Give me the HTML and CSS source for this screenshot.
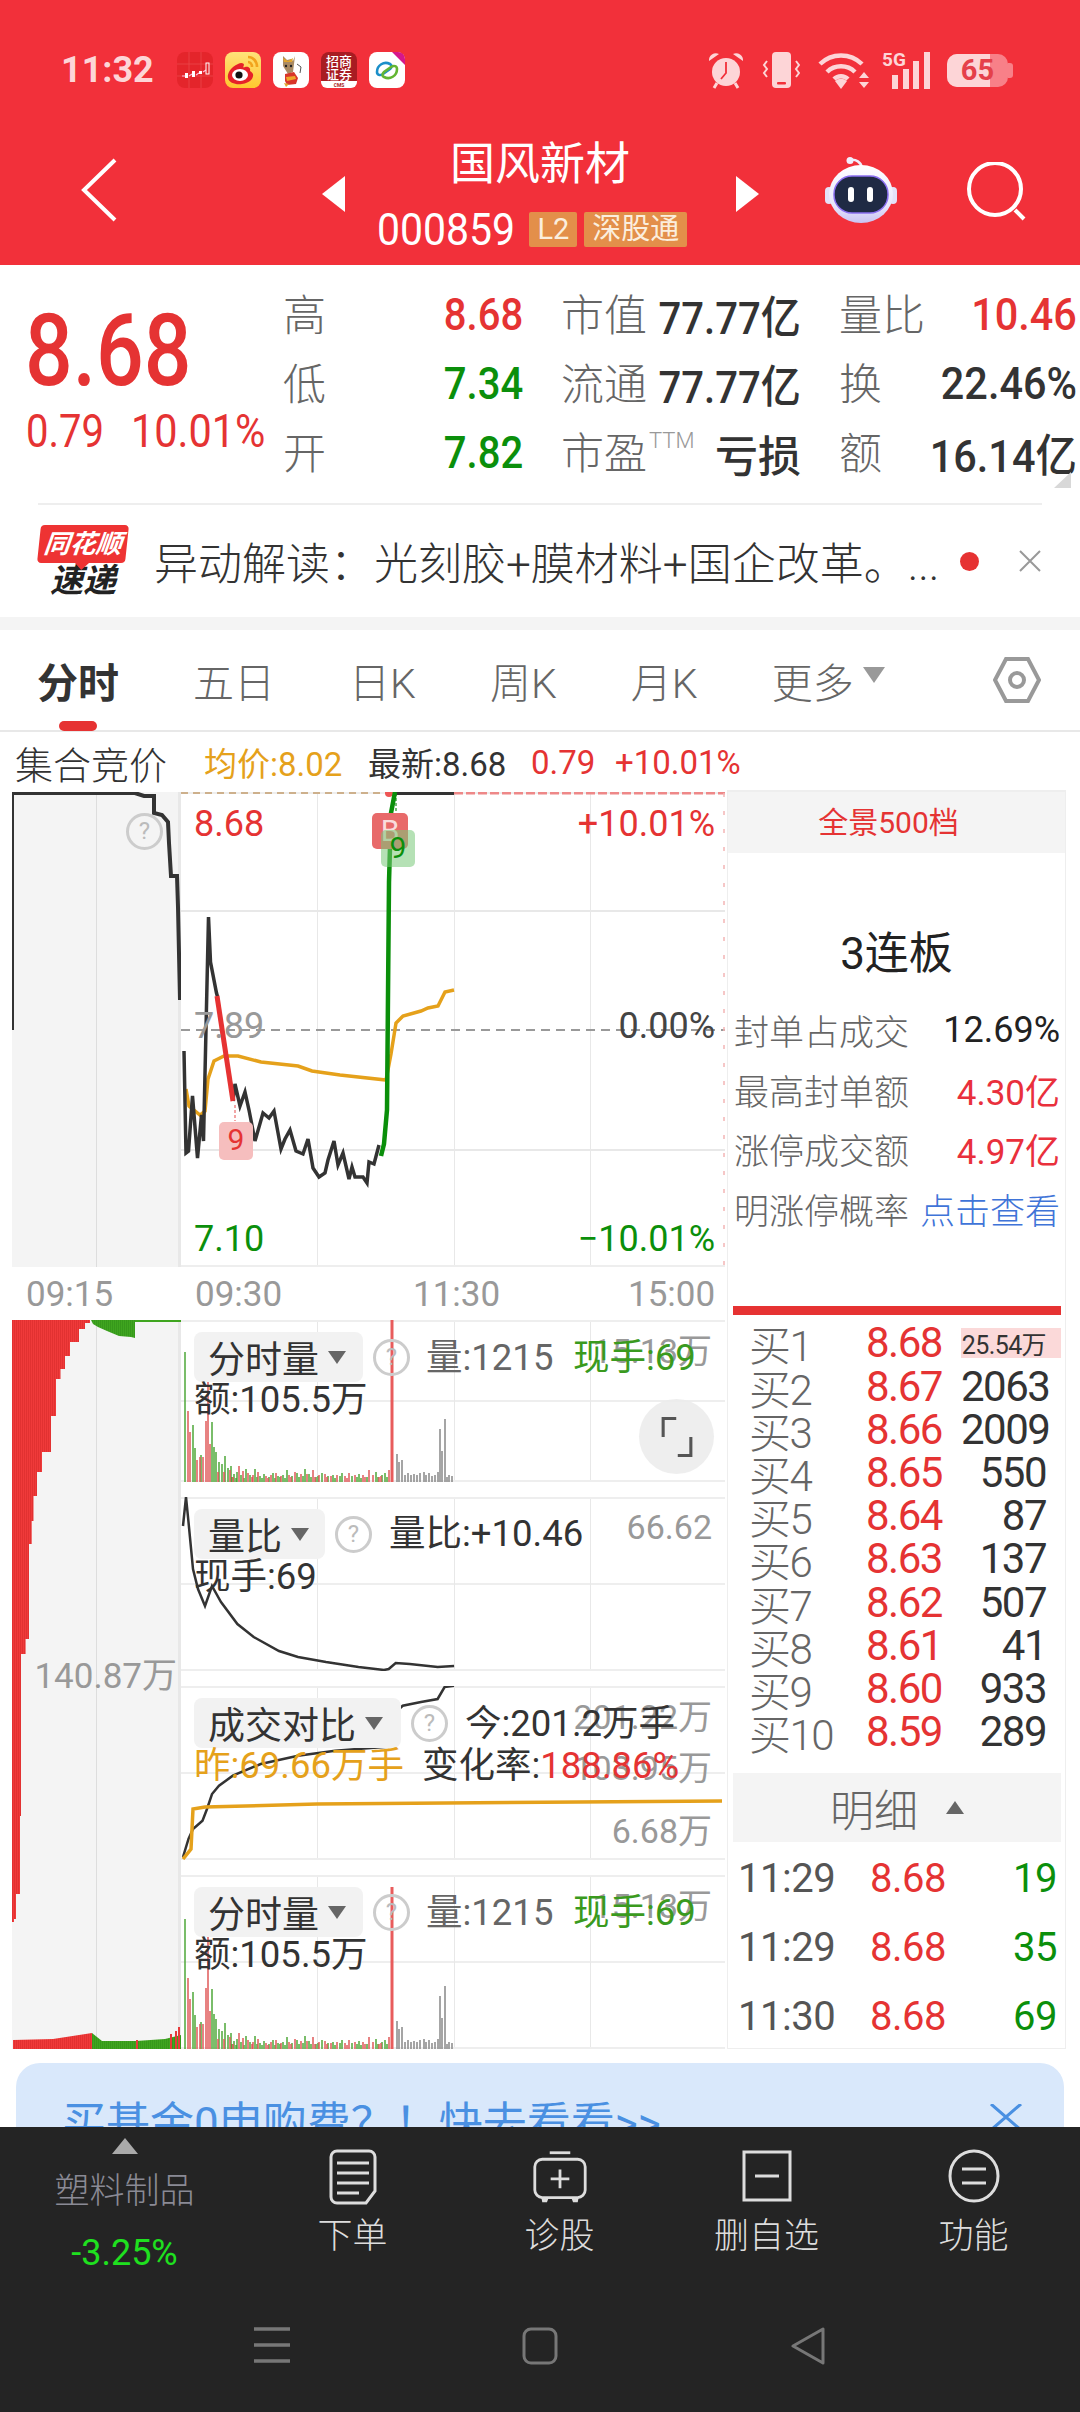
FILE: index.html
```html
<!DOCTYPE html>
<html lang="zh">
<head>
    <meta charset="UTF-8">
    <meta name="viewport" content="width=device-width, initial-scale=1.0">
    <title>国风新材 000859</title>
    <link rel="stylesheet" href="styles.css">
</head>
<body>
<div class="screen">

    <!-- Red header: status bar and stock title -->
    <header class="header">
        <div class="status-bar">
            <div class="status-left">
                <span class="clock">11:32</span>
                <svg class="app-icon" viewBox="0 0 36 36"><rect width="36" height="36" rx="8" fill="#e4252b"/><path d="M0 12h36M0 24h36M12 0v36M24 0v36" stroke="#ec4a4f" stroke-width="0.7"/><path d="M5 24h4M12 24l3-2M19 23l3-2M26 20l3-2" stroke="#fbd" stroke-width="1.2"/><rect x="8" y="21" width="3" height="5" fill="#fff"/><rect x="15" y="19" width="3" height="6" fill="#fff"/><rect x="22" y="19" width="3" height="3" fill="#fff"/><rect x="29" y="11" width="3" height="11" fill="none" stroke="#fff"/></svg>
                <svg class="app-icon" viewBox="0 0 36 36"><defs><linearGradient id="weibo-bg" x1="0" y1="0" x2="0" y2="1"><stop offset="0" stop-color="#ffe27a"/><stop offset="1" stop-color="#ffc62e"/></linearGradient></defs><rect width="36" height="36" rx="8" fill="url(#weibo-bg)"/><path d="M13 12C6 15 2 21 3 26c1 5 8 7 14 6 8-1 12-6 11-10-1-2-3-3-3-3 1-3-2-5-5-4-2 1-2 0-1-2 0-2-3-3-6-1z" fill="#e6212a"/><ellipse cx="15" cy="23" rx="8" ry="6" fill="#fff"/><circle cx="14" cy="23" r="3.600" fill="#111"/><path d="M23 5c5 0 9 4 9 10M23 10c2 0 4 2 4 5" stroke="#f2a31d" stroke-width="2.600" fill="none"/></svg>
                <svg class="app-icon" viewBox="0 0 36 36"><rect width="36" height="36" rx="8" fill="#fff"/><path d="M10 4l4 4 4-1 2 2 2-5-1 8-1 8-5 2-5-8z" fill="#a98a63"/><path d="M10 6l5 3 5-3-1 4h-8z" fill="#e2a52e"/><circle cx="13" cy="14" r="1.200" fill="#222"/><circle cx="18" cy="14" r="1.200" fill="#222"/><path d="M12 22l9-2 4 6-2 6-9 1-2-4z" fill="#d8352a"/><path d="M13 25l9-1 1 3-9 2z" fill="#f0a62a"/><path d="M24 12l4 3-1 6" stroke="#555" fill="none"/><path d="M11 31l2 4 3-3z" fill="#e2a52e"/></svg>
                <svg class="app-icon" viewBox="0 0 36 36"><rect width="36" height="36" rx="8" fill="#a81c22"/><path d="M0 29h36v1a6 6 0 0 1-6 6H6a6 6 0 0 1-6-6z" fill="#fff"/><text x="18" y="14" class="app-text">招商</text><text x="18" y="27" class="app-text">证券</text><text x="18" y="35" class="app-mark">CMS</text></svg>
                <svg class="app-icon" viewBox="0 0 36 36"><rect width="36" height="36" rx="8" fill="#fff"/><path d="M23 0h6a7 7 0 0 1 7 7v6z" fill="#d6168b"/><path d="M8 20c0-7 7-11 13-8 2 1 2 3 0 5l-7 5c-3 2-6 1-6-2z" fill="none" stroke="#1b8fc9" stroke-width="2.600"/><path d="M28 17c0 7-7 11-13 8-2-1-2-3 0-5l7-5c3-2 6-1 6 2z" fill="none" stroke="#63b532" stroke-width="2.600"/></svg>
            </div>
            <div class="status-right">
                <svg class="alarm" viewBox="0 0 36 38"><circle cx="18" cy="21" r="14" fill="#fdd5d7"/><path d="M18 11v11l-5 6" stroke="#f2303a" stroke-width="1.800" fill="none"/><path d="M1 10a7 7 0 0 1 10-7zM35 10a7 7 0 0 0-10-7z" fill="#fdd5d7"/><path d="M9 32l-3 5M27 32l3 5" stroke="#fdd5d7" stroke-width="3"/></svg>
                <svg class="vibrate" viewBox="0 0 38 38"><rect x="10" y="1" width="19" height="36" rx="4" fill="#fdd5d7"/><rect x="15" y="31" width="9" height="2.500" rx="1" fill="#f2303a"/><path d="M5 10l-3 4 3 4-3 4 3 4M34 10l3 4-3 4 3 4-3 4" stroke="#fdd5d7" stroke-width="2" fill="none"/></svg>
                <svg class="wifi" viewBox="0 0 52 38"><path d="M2 13a30 30 0 0 1 42 0M9 21a20 20 0 0 1 28 0M16 28a10 10 0 0 1 14 0" stroke="#fdd5d7" stroke-width="4.500" fill="none"/><path d="M23 38l-6-8a9 9 0 0 1 12 0z" fill="#fdd5d7"/><path d="M46 21l5 6H41zM46 37l5-6H41z" fill="#fdd5d7"/></svg>
                <svg class="signal" viewBox="0 0 50 38"><text x="0" y="15" class="net-text">5G</text><rect x="10" y="24" width="6" height="14" fill="#fdd5d7"/><rect x="21" y="18" width="6" height="20" fill="#fdd5d7"/><rect x="31" y="10" width="6" height="28" fill="#fdd5d7"/><rect x="42" y="1" width="6" height="37" fill="#fdd5d7"/></svg>
                <div class="battery"><span class="battery-level"></span><span class="battery-text">65</span></div>
            </div>
        </div>

        <div class="toolbar">
            <div class="toolbar-left">
                <svg class="back-icon" viewBox="0 0 36 64"><path d="M34 2L3 32l31 30" stroke="#fff" stroke-width="4" fill="none"/></svg>
            </div>
            <div class="stock-switch">
                <span class="tri-left"></span>
                <div class="stock-title">
                    <div class="stock-name">国风新材</div>
                    <div class="stock-sub">
                        <span class="stock-code">000859</span>
                        <span class="stock-tag">L2</span>
                        <span class="stock-tag">深股通</span>
                    </div>
                </div>
                <span class="tri-right"></span>
            </div>
            <div class="toolbar-right">
                <svg class="robot" viewBox="0 0 72 66">
                    <defs><linearGradient id="robot-head" x1="0" y1="0" x2="0" y2="1"><stop offset="0" stop-color="#ffffff"/><stop offset="0.7" stop-color="#e8e6fb"/><stop offset="1" stop-color="#c9c3f3"/></linearGradient></defs>
                    <path d="M25 3c6-1 11 2 12 8" stroke="#f1eefc" stroke-width="2.500" fill="none"/>
                    <circle cx="25" cy="3.500" r="3.500" fill="#f1eefc"/>
                    <rect x="0" y="30" width="8" height="17" rx="4" fill="#e4e1f8"/>
                    <rect x="64" y="30" width="8" height="17" rx="4" fill="#e4e1f8"/>
                    <ellipse cx="36" cy="37" rx="32" ry="29" fill="url(#robot-head)"/>
                    <rect x="9" y="19" width="54" height="37" rx="18" fill="#1f2a44" stroke="#8a6ff0" stroke-width="1.500"/>
                    <rect x="23" y="30" width="6" height="15" rx="3" fill="#fff"/>
                    <rect x="42" y="30" width="6" height="15" rx="3" fill="#fff"/>
                </svg>
                <svg class="search" viewBox="0 0 60 60"><circle cx="29" cy="27" r="26" stroke="#fff" stroke-width="4" fill="none"/><path d="M49 48l9 9" stroke="#fff" stroke-width="4"/></svg>
            </div>
        </div>
    </header>

    <!-- Price and headline numbers -->
    <section class="quote">
        <div class="quote-price">
            <div class="price-big">8.68</div>
            <div class="price-change"><span class="change-abs">0.79</span><span class="change-pct">10.01%</span></div>
        </div>
        <div class="quote-table">
            <div class="cell"><span class="cell-name">高</span><span class="cell-num up">8.68</span></div>
            <div class="cell"><span class="cell-name">市值</span><span class="cell-num">77.77亿</span></div>
            <div class="cell"><span class="cell-name">量比</span><span class="cell-num up">10.46</span></div>
            <div class="cell"><span class="cell-name">低</span><span class="cell-num down">7.34</span></div>
            <div class="cell"><span class="cell-name">流通</span><span class="cell-num">77.77亿</span></div>
            <div class="cell"><span class="cell-name">换</span><span class="cell-num">22.46%</span></div>
            <div class="cell"><span class="cell-name">开</span><span class="cell-num down">7.82</span></div>
            <div class="cell"><span class="cell-name">市盈<sup class="ttm">TTM</sup></span><span class="cell-num loss">亏损</span></div>
            <div class="cell"><span class="cell-name">额</span><span class="cell-num">16.14亿</span></div>
        </div>
        <span class="corner-mark"></span>
    </section>

    <!-- News ticker -->
    <section class="news">
        <div class="news-logo">
            <span class="logo-top">同花顺</span>
            <span class="logo-bottom">速递</span>
        </div>
        <div class="news-text">异动解读：光刻胶+膜材料+国企改革。...</div>
        <span class="news-dot"></span>
        <svg class="news-close" viewBox="0 0 24 24"><path d="M2 2l20 20M22 2L2 22" stroke="#999" stroke-width="2"/></svg>
    </section>

    <div class="band"></div>

    <!-- Period tabs -->
    <nav class="tabs">
        <span class="tab active">分时</span>
        <span class="tab">五日</span>
        <span class="tab">日K</span>
        <span class="tab">周K</span>
        <span class="tab">月K</span>
        <span class="tab tab-more">更多<i class="more-arrow"></i></span>
        <svg class="hex-icon" viewBox="0 0 48 46"><path d="M13 2h22l11 21-11 21H13L2 23z" stroke="#999" stroke-width="4" fill="none"/><circle cx="24" cy="23" r="7" stroke="#999" stroke-width="4" fill="none"/></svg>
    </nav>

    <div class="chart-head">
        <span class="head-title">集合竞价</span>
        <span class="head-avg">均价:8.02</span>
        <span class="head-last">最新:8.68</span>
        <span class="head-change">0.79</span>
        <span class="head-pct">+10.01%</span>
    </div>

    <section class="market">
        <div class="charts">

            <!-- Price chart -->
            <div class="chart-row">
                <div class="auction auction-main">
                    <svg class="fill" viewBox="12 793 169 475">
                        <path d="M12 1031V794H135l9 3h10v17l8 2 6 7 1 21 2 33h6l1 31 2 93" stroke="#333" stroke-width="4" fill="none"/>
                    </svg>
                    <span class="help help-main">?</span>
                </div>
                <div class="pane pane-main">
                    <svg class="fill" viewBox="181 793 544 475">
                        <path d="M181 1031H725" stroke="#999" stroke-width="2" stroke-dasharray="9 6"/>
                        <path d="M181 794H395" stroke="#cdb08c" stroke-width="2" stroke-dasharray="7 5"/>
                        <path d="M454 794H725" stroke="#e88" stroke-width="3" stroke-dasharray="9 3"/>
                        <path d="M724 794V1268" stroke="#f3b5b5" stroke-width="1.500" stroke-dasharray="4 14"/>
                        <path d="M186 1090l3 17 11 9 5-4 3-32 6-18 10-5 14 0 23 6 37 4 14 5 28 4 46 5 5-26 5-31 7-7 18-5 7-3 10-2 7-14 9-2" stroke="#e5a11b" stroke-width="3.500" fill="none"/>
                        <path d="M184 1052l2 102 2.500-2 4-55 5 62 4-43 2 26 5-224 2 45 6 31 1 3.500" stroke="#333" stroke-width="3.500" fill="none"/>
                        <path d="M233 1102l2-17 5 22 5-14 4 18 6 31 8-28 6 5 5-7 7 38 4-10 5-9 6 21 7 3 5-15 5 29 6 9 6-4 3-13 6-19 4 24 5-12 6 26 3-12 3 10 8 0 4 6 2-21 5 2 5-19" stroke="#333" stroke-width="3.500" fill="none"/>
                        <path d="M217 997l16 105" stroke="#e63232" stroke-width="5" fill="none"/>
                        <path d="M235 1106v16" stroke="#e88" stroke-width="1.500" stroke-dasharray="3 2"/>
                        <path d="M396 794v37" stroke="#4aa64a" stroke-width="1.500" stroke-dasharray="3 2"/>
                        <path d="M395 794h59" stroke="#333" stroke-width="4"/>
                        <circle cx="389" cy="794" r="4" fill="#e55"/>
                        <path d="M381 1157l3-12 3-34 2-228 2-69 4-21" stroke="#0a8f0a" stroke-width="4.500" fill="none"/>
                    </svg>
                    <span class="trade-tag tag-buy">B</span>
                    <span class="trade-tag tag-green">9</span>
                    <span class="trade-tag tag-red">9</span>
                    <span class="lbl num-left up">8.68</span>
                    <span class="lbl num-right up">+10.01%</span>
                    <span class="lbl num-left mid-row muted">7.89</span>
                    <span class="lbl num-right mid-row dark">0.00%</span>
                    <span class="lbl num-left low-row down">7.10</span>
                    <span class="lbl num-right low-row down">−10.01%</span>
                </div>
            </div>

            <div class="time-axis">
                <span class="time-open">09:15</span>
                <span class="time-start">09:30</span>
                <span class="time-noon">11:30</span>
                <span class="time-close">15:00</span>
            </div>

            <div class="chart-row">
                <!-- Auction volume column beside the indicator panes -->
                <div class="auction auction-low">
                    <svg class="fill" viewBox="12 1321 169 729">
                        <defs>
                            <pattern id="red-stripes" width="2" height="4" patternUnits="userSpaceOnUse"><rect width="2" height="4" fill="#f03a3a"/><rect width="0.600" height="4" fill="#d92b2b"/></pattern>
                            <pattern id="green-stripes" width="2" height="4" patternUnits="userSpaceOnUse"><rect width="2" height="4" fill="#3fa51f"/><rect width="0.600" height="4" fill="#2f8f18"/></pattern>
                        </defs>
                        <path d="M12 1321H90V1324H85V1330H79V1343H70V1357H65V1370H60.500V1380H56V1417H51V1453H42V1473H37V1497H33.500V1522H31.700V1545H29V1640H25.600V1655H21V1817H20V1895H16V1920H14V1923H12z" fill="url(#red-stripes)"/>
                        <path d="M91 1321h44v18l-4-1-12-1-12-5-9-4-5-3z" fill="url(#green-stripes)"/>
                        <path d="M135 1321h46v2h-46z" fill="#3fa51f"/>
                        <path d="M13 2050v-9l40-1 39-6v16z" fill="url(#red-stripes)"/>
                        <path d="M92 2050v-16l10 8 34 0 29-2 16-4v14z" fill="url(#green-stripes)"/>
                        <path d="M136 2050v-9h2v9zM170 2050v-15h2v15zM175 2050v-18h2v18zM178 2050v-22h2v22z" fill="#e63a3a"/>
                    </svg>
                    <span class="lbl auction-total">140.87万</span>
                </div>
                <div class="panes">

                    <div class="pane pane-short">
                        <svg class="fill" viewBox="0 0 544 162">
                            <g id="vol-bars" fill="none" stroke-width="1.500">
                                <path stroke="#4fa83a" d="M4 162V32M12 162V105M14 162V128M20 162V135M31 162V102M33 162V127M35 162V132M38 162V142M41 162V144M44 162V136M47 162V148M50 162V146M51 162V157M53 162V154M55 162V158M56 162V152M60 162V155M63 162V158M65 162V149M69 162V155M74 162V149M76 162V157M79 162V156M81 162V158M83 162V154M88 162V157M92 162V153M94 162V158M97 162V156M99 162V157M102 162V155M104 162V158M106 162V150M111 162V156M116 162V153M118 162V157M122 162V156M124 162V149M128 162V154M130 162V157M135 162V157M137 162V156M141 162V153M147 162V156M152 162V155M154 162V158M159 162V156M161 162V153M171 162V156M176 162V157M178 162V154M180 162V158M186 162V157M195 162V152M197 162V157M201 162V155M204 162V153M206 162V157"/>
                                <path stroke="#e05a5a" d="M7 162V91M9 162V112M16 162V140M19 162V137M22 162V137M25 162V101M27 162V32M29 162V124M37 162V152M43 162V152M49 162V150M52 162V157M58 162V146M62 162V151M67 162V153M71 162V157M72 162V155M77 162V152M85 162V156M87 162V158M90 162V155M95 162V153M100 162V156M108 162V155M110 162V157M114 162V152M120 162V154M126 162V154M132 162V150M134 162V157M138 162V155M144 162V154M146 162V157M150 162V156M156 162V155M164 162V156M166 162V158M168 162V153M174 162V155M182 162V155M184 162V157M188 162V150M192 162V155M198 162V157M200 162V156M208 162V150"/>
                                <path stroke="#e85c5c" stroke-width="3" d="M211 162V0"/>
                                <path stroke="#888" d="M216 162V134M218 162V142M221 162V140M224 162V155M227 162V153M230 162V155M233 162V154M236 162V155M239 162V153M243 162V152M245 162V155M248 162V153M251 162V156M254 162V155M257 162V152M259 162V109M261 162V131M264 162V99M266 162V157M268 162V155M271 162V156"/>
                            </g>
                        </svg>
                        <span class="chip chip-vol">分时量<i class="chip-arrow"></i></span>
                        <span class="help help-vol">?</span>
                        <span class="lbl axis-top">15.13万</span>
                        <span class="lbl vol-value">量:1215</span>
                        <span class="lbl vol-hand">现手:69</span>
                        <span class="lbl second-row">额:105.5万</span>
                        <span class="expand">
                            <svg viewBox="0 0 40 52"><path d="M19 2H2v24M21 50h17V26" stroke="#555" stroke-width="4" fill="none"/></svg>
                        </span>
                    </div>

                    <div class="pane pane-tall">
                        <svg class="fill" viewBox="181 1498 544 174">
                            <path d="M183 1527l3-29 2.500 25 4.500 47 5 20 7 17 7-20 9 16 16.400 22 16.300 13 25.300 14 19 6 28 5 32.500 5 25.500 3 4.700-1 7-6 14 1 28 3 16.400-1" stroke="#333" stroke-width="2.500" fill="none"/>
                        </svg>
                        <span class="chip chip-ratio">量比<i class="chip-arrow"></i></span>
                        <span class="help help-ratio">?</span>
                        <span class="lbl axis-top axis-ratio">66.62</span>
                        <span class="lbl ratio-value">量比:+10.46</span>
                        <span class="lbl second-row">现手:69</span>
                    </div>

                    <div class="pane pane-tall">
                        <svg class="fill" viewBox="181 1687 544 174">
                            <path d="M183 1858l5.500-18 4.500-10 9.500-8.300 4.500-11.700 5-15 7-8.300 13.800-10 27.900-11.700 37.300-8.300 37-5 51.400-4 4.600-14.700 4.700-20 7-6.300 18.300-3.700 16.600-3 7-12 9.400-1.300" stroke="#333" stroke-width="2.500" fill="none"/>
                            <path d="M183 1860l8-10 2-40 12-2 112-3 405-3" stroke="#e5a11b" stroke-width="3.500" fill="none"/>
                        </svg>
                        <span class="chip chip-compare">成交对比<i class="chip-arrow"></i></span>
                        <span class="help help-compare">?</span>
                        <span class="lbl axis-top axis-compare">201.22万</span>
                        <span class="lbl axis-top axis-compare-mid">103.95万</span>
                        <span class="lbl axis-top axis-compare-low">6.68万</span>
                        <span class="lbl today-value">今:201.2万手</span>
                        <span class="lbl second-row orange">昨:69.66万手</span>
                        <span class="lbl rate-value">变化率:<span class="up">188.86%</span></span>
                    </div>

                    <div class="pane pane-tall pane-last">
                        <svg class="fill" viewBox="0 -12 544 174"><use href="#vol-bars"/></svg>
                        <span class="chip chip-vol">分时量<i class="chip-arrow"></i></span>
                        <span class="help help-vol">?</span>
                        <span class="lbl axis-top">15.13万</span>
                        <span class="lbl vol-value">量:1215</span>
                        <span class="lbl vol-hand">现手:69</span>
                        <span class="lbl second-row">额:105.5万</span>
                    </div>

                </div>
            </div>
        </div>

        <!-- Order book column -->
        <aside class="side">
            <div class="side-tab">全景500档</div>
            <div class="board-name">3连板</div>
            <div class="stats">
                <div class="stat"><span>封单占成交</span><b>12.69%</b></div>
                <div class="stat"><span>最高封单额</span><b class="up">4.30亿</b></div>
                <div class="stat"><span>涨停成交额</span><b class="up">4.97亿</b></div>
                <div class="stat"><span>明涨停概率</span><a class="stat-link">点击查看</a></div>
            </div>
            <div class="book-bar"></div>
            <div class="book">
                <div class="book-row"><span class="book-name">买1</span><span class="book-price">8.68</span><span class="book-vol book-big">25.54万</span></div>
                <div class="book-row"><span class="book-name">买2</span><span class="book-price">8.67</span><span class="book-vol">2063</span></div>
                <div class="book-row"><span class="book-name">买3</span><span class="book-price">8.66</span><span class="book-vol">2009</span></div>
                <div class="book-row"><span class="book-name">买4</span><span class="book-price">8.65</span><span class="book-vol">550</span></div>
                <div class="book-row"><span class="book-name">买5</span><span class="book-price">8.64</span><span class="book-vol">87</span></div>
                <div class="book-row"><span class="book-name">买6</span><span class="book-price">8.63</span><span class="book-vol">137</span></div>
                <div class="book-row"><span class="book-name">买7</span><span class="book-price">8.62</span><span class="book-vol">507</span></div>
                <div class="book-row"><span class="book-name">买8</span><span class="book-price">8.61</span><span class="book-vol">41</span></div>
                <div class="book-row"><span class="book-name">买9</span><span class="book-price">8.60</span><span class="book-vol">933</span></div>
                <div class="book-row"><span class="book-name">买10</span><span class="book-price">8.59</span><span class="book-vol">289</span></div>
            </div>
            <div class="detail-head">明细<i class="detail-arrow"></i></div>
            <div class="detail-row"><span class="detail-time">11:29</span><span class="detail-price">8.68</span><span class="detail-vol">19</span></div>
            <div class="detail-row"><span class="detail-time">11:29</span><span class="detail-price">8.68</span><span class="detail-vol">35</span></div>
            <div class="detail-row"><span class="detail-time">11:30</span><span class="detail-price">8.68</span><span class="detail-vol">69</span></div>
        </aside>
    </section>

    <div class="banner">
        <span class="banner-text">买基金0申购费？！快去看看&gt;&gt;</span>
        <svg class="banner-close" viewBox="0 0 32 26"><path d="M1 0l30 26M31 0L1 26" stroke="#4a90e2" stroke-width="3"/></svg>
    </div>

    <!-- Dark action bar and system navigation -->
    <footer class="footer">
        <div class="actions">
            <div class="sector">
                <span class="sector-arrow"></span>
                <span class="sector-name">塑料制品</span>
                <span class="sector-pct">-3.25%</span>
            </div>
            <div class="action">
                <svg class="action-icon" viewBox="0 0 50 56"><path d="M9 2h32a6 6 0 0 1 6 6v34l-9 12H9a6 6 0 0 1-6-6V8a6 6 0 0 1 6-6z" stroke="#ddd" stroke-width="3" fill="none"/><path d="M9 14h32M9 24h32M9 34h32M9 44h22" stroke="#ddd" stroke-width="3"/></svg>
                <span>下单</span>
            </div>
            <div class="action">
                <svg class="action-icon" viewBox="0 0 60 56"><path d="M19 2h22" stroke="#ddd" stroke-width="3"/><rect x="3" y="9" width="54" height="41" rx="8" stroke="#ddd" stroke-width="3" fill="none"/><path d="M30 20v20M20 30h20" stroke="#ddd" stroke-width="3"/><path d="M10 50h8l-2 5h-5zM42 50h8l-1 5h-5z" fill="#ddd"/></svg>
                <span>诊股</span>
            </div>
            <div class="action">
                <svg class="action-icon" viewBox="0 0 50 56"><rect x="2" y="3" width="46" height="48" stroke="#ddd" stroke-width="3" fill="none"/><path d="M13 27h24" stroke="#ddd" stroke-width="3"/></svg>
                <span>删自选</span>
            </div>
            <div class="action">
                <svg class="action-icon" viewBox="0 0 52 56"><ellipse cx="26" cy="27" rx="24" ry="25" stroke="#ddd" stroke-width="3" fill="none"/><path d="M14 20h24M14 34h24" stroke="#ddd" stroke-width="3"/></svg>
                <span>功能</span>
            </div>
        </div>
        <div class="nav-bar">
            <svg class="nav-menu" viewBox="0 0 36 36"><path d="M0 2h36M0 18h36M0 34h36" stroke="#777" stroke-width="3.500"/></svg>
            <svg class="nav-home" viewBox="0 0 36 38"><rect x="2" y="2" width="32" height="34" rx="7" stroke="#777" stroke-width="3" fill="none"/></svg>
            <svg class="nav-back" viewBox="0 0 36 38"><path d="M33 2v34L3 19z" stroke="#777" stroke-width="3" stroke-linejoin="round" fill="none"/></svg>
        </div>
    </footer>
</div>
</body>
</html>
```
FILE: styles.css
```css
* {
    box-sizing: border-box;
}

body {
    margin: 0;
    background-color: #fff;
    font-family: Roboto, "Noto Sans CJK SC", sans-serif;
    color: #333;
}

.screen {
    position: relative;
    width: 1080px;
    height: 2412px;
    overflow: hidden;
}

.up { color: #e53333; }
.down { color: #0b8f0b; }
.muted { color: #999; }
.dark { color: #444; }
.orange { color: #e5a11b; }

/* Header */
.header {
    height: 265px;
    background-color: #f2303a;
    color: #fff;
}

.status-bar {
    display: flex;
    justify-content: space-between;
    align-items: center;
    height: 140px;
    padding: 0 68px 0 61px;
}

.status-left,
.status-right {
    display: flex;
    align-items: center;
}

.clock {
    width: 116px;
    font-size: 36px;
    font-weight: 700;
    color: #fdd5d7;
}

.app-icon {
    width: 36px;
    height: 36px;
    margin-right: 12px;
}

.app-text {
    font-size: 13px;
    font-weight: 500;
    fill: #fff;
    text-anchor: middle;
}

.app-mark {
    font-size: 5px;
    font-weight: 700;
    fill: #a81c22;
    text-anchor: middle;
}

.net-text {
    font-size: 19px;
    font-weight: 700;
    fill: #fdd5d7;
}

.alarm { width: 36px; height: 38px; margin-right: 18px; }
.vibrate { width: 38px; height: 38px; margin-right: 18px; }
.wifi { width: 52px; height: 38px; margin-right: 12px; }
.signal { width: 50px; height: 38px; margin-right: 15px; }

.battery {
    position: relative;
    width: 61px;
    height: 33px;
    margin-right: 4px;
    border-radius: 10px;
    background-color: #f88088;
    text-align: center;
}

.battery::after {
    content: "";
    position: absolute;
    right: -5px;
    top: 9px;
    width: 5px;
    height: 15px;
    border-radius: 0 3px 3px 0;
    background-color: #f88088;
}

.battery-level {
    position: absolute;
    left: 0;
    top: 0;
    bottom: 0;
    width: 43px;
    border-radius: 10px 0 0 10px;
    background-color: #fdd5d7;
}

.battery-text {
    position: relative;
    font-size: 29px;
    line-height: 33px;
    font-weight: 700;
    color: #e5404a;
}

.toolbar {
    display: grid;
    grid-template-columns: 1fr auto 1fr;
}

.toolbar-left {
    padding: 18px 0 0 81px;
}

.back-icon {
    width: 36px;
    height: 64px;
}

.stock-switch {
    display: flex;
    align-items: center;
    width: 437px;
    justify-content: space-between;
}

.tri-left,
.tri-right {
    width: 0;
    height: 0;
    border-top: 18px solid transparent;
    border-bottom: 18px solid transparent;
}

.tri-left { border-right: 23px solid #fff; }
.tri-right { border-left: 23px solid #fff; }

.stock-title {
    display: flex;
    flex-direction: column;
    align-items: center;
}

.stock-name {
    font-size: 45px;
    line-height: 50px;
}

.stock-sub {
    display: flex;
    align-items: center;
    gap: 7px;
    margin: 21px 16px 0 0;
    height: 36px;
}

.stock-code {
    margin-right: -6px;
    font-size: 45px;
    transform: scaleX(0.91);
    transform-origin: left center;
}

.stock-tag {
    height: 35px;
    padding: 0 8px;
    background-color: #e38f4a;
    border-radius: 2px;
    font-size: 29px;
    line-height: 35px;
    color: #fbeedd;
}

.toolbar-right {
    display: flex;
    justify-content: flex-end;
    align-items: flex-start;
    gap: 69px;
    padding: 17px 54px 0 0;
}

.robot { width: 72px; height: 66px; }
.search { width: 60px; height: 60px; margin-top: 5px; }

/* Quote block */
.quote {
    position: relative;
    display: flex;
    height: 238px;
    margin: 0;
}

.quote-price {
    width: 283px;
    padding: 26px 0 0 25px;
    color: #e53333;
}

/* The price figures are drawn narrower than Roboto's own width */
.price-big {
    font-size: 100px;
    line-height: 120px;
    font-weight: 500;
    transform: scaleX(0.84);
    transform-origin: left center;
}

.price-change {
    display: flex;
    margin-top: -2px;
    font-size: 46px;
    line-height: 44px;
}

.change-abs,
.change-pct {
    flex: none;
    transform-origin: left center;
}

.change-abs {
    width: 105px;
    margin-left: 1px;
    transform: scaleX(0.87);
}

.change-pct {
    transform: scaleX(0.9);
}

.quote-table {
    display: grid;
    grid-template-columns: 240px 240px 240px;
    grid-auto-rows: 69px;
    column-gap: 38px;
    padding-top: 15px;
}

.cell {
    display: flex;
    justify-content: space-between;
    align-items: center;
    white-space: nowrap;
}

.cell-name {
    position: relative;
    top: -3px;
    font-size: 43px;
    font-weight: 300;
    color: #666;
}

.cell-num {
    margin-left: -60px;
    font-size: 45px;
    font-weight: 500;
    transform: scaleX(0.89);
    transform-origin: right center;
}

.cell:nth-child(3n) {
    padding-right: 2px;
}

.cell:nth-child(3n) .cell-num {
    transform: scaleX(0.92);
}

.loss {
    font-size: 43px;
    transform: none;
}

.ttm {
    position: absolute;
    top: 10px;
    left: 88px;
    font-size: 22px;
    line-height: 24px;
    color: #999;
}

.corner-mark {
    position: absolute;
    right: 9px;
    bottom: 15px;
    border-left: 17px solid transparent;
    border-bottom: 16px solid #d8d8d8;
}

/* News */
.news {
    display: flex;
    align-items: center;
    height: 114px;
    margin: 0 38px;
    border-top: 2px solid #eee;
}

.news-logo {
    flex: none;
    display: flex;
    flex-direction: column;
    align-items: center;
    width: 90px;
    margin-right: 26px;
    font-style: italic;
    font-weight: 700;
}

.logo-top {
    position: relative;
    width: 88px;
    height: 38px;
    background-color: #e33;
    border-radius: 4px;
    color: #fff;
    font-size: 26px;
    line-height: 38px;
    text-align: center;
    transform: skewX(-6deg);
}

.logo-top::after {
    content: "";
    position: absolute;
    left: 38px;
    top: 38px;
    border-left: 7px solid transparent;
    border-right: 7px solid transparent;
    border-top: 7px solid #e33;
}

.logo-bottom {
    margin-top: 1px;
    font-size: 33px;
    line-height: 34px;
    color: #222;
}

.news-text {
    flex: none;
    width: 806px;
    font-size: 44px;
    font-weight: 300;
    white-space: nowrap;
    color: #333;
}

.news-dot {
    flex: none;
    width: 19px;
    height: 19px;
    border-radius: 50%;
    background-color: #e63232;
}

.news-close {
    flex: none;
    width: 24px;
    height: 24px;
    margin-left: 39px;
}

.band {
    height: 13px;
    background-color: #f4f4f4;
}

/* Tabs */
.tabs {
    display: flex;
    align-items: center;
    gap: 74px;
    height: 102px;
    padding-left: 37px;
    border-bottom: 2px solid #e8e8e8;
    font-size: 41px;
    font-weight: 300;
    color: #666;
}

.tab.active {
    position: relative;
    font-weight: 700;
    color: #333;
}

.tab.active::after {
    content: "";
    position: absolute;
    left: 22px;
    bottom: -21px;
    width: 38px;
    height: 10px;
    border-radius: 5px;
    background-color: #e63232;
}

.tab-more {
    display: flex;
    align-items: center;
}

.more-arrow {
    margin: -10px 0 0 9px;
    border-left: 11px solid transparent;
    border-right: 11px solid transparent;
    border-top: 16px solid #999;
}

.hex-icon {
    width: 48px;
    height: 46px;
    margin-left: 34px;
}

.chart-head {
    display: flex;
    align-items: center;
    height: 58px;
    padding: 2px 0 0 15px;
    font-size: 33px;
}

.head-title {
    width: 189px;
    font-size: 38px;
    font-weight: 300;
}

.head-avg {
    width: 164px;
    color: #e5a11b;
}

.head-last {
    width: 163px;
}

.head-change {
    width: 84px;
    color: #e53333;
}

.head-pct {
    color: #e53333;
}

/* Chart column */
.market {
    display: flex;
    height: 1259px;
    padding-left: 12px;
}

.charts {
    width: 715px;
    padding-top: 2px;
}

.chart-row {
    display: flex;
}

.auction {
    position: relative;
    flex: none;
    width: 169px;
    border-right: 3px solid #e8e8e8;
    background-color: #f4f4f4;
    background-image: linear-gradient(#ddd, #ddd);
    background-repeat: no-repeat;
    background-position: 84px 0;
    background-size: 1px 100%;
}

.auction-main {
    height: 475px;
}

.auction-low {
    height: 729px;
}

.fill {
    position: absolute;
    left: 0;
    top: 0;
    width: 100%;
    height: 100%;
}

/* The drawings span the full box, borders included */
.auction .fill {
    width: calc(100% + 3px);
}

.pane .fill {
    top: -2px;
    height: calc(100% + 4px);
}

.pane {
    position: relative;
    width: 544px;
    border-top: 2px solid #eee;
    border-bottom: 2px solid #eee;
    background-image:
        linear-gradient(#e8e8e8, #e8e8e8),
        linear-gradient(#e8e8e8, #e8e8e8),
        linear-gradient(#e8e8e8, #e8e8e8),
        linear-gradient(#eee, #eee);
    background-repeat: no-repeat;
    background-size: 1px 100%, 1px 100%, 1px 100%, 100% 2px;
    background-position: 136px 0, 273px 0, 409px 0, 0 50%;
}

.pane-main {
    height: 475px;
    background-image:
        linear-gradient(#e8e8e8, #e8e8e8),
        linear-gradient(#e8e8e8, #e8e8e8),
        linear-gradient(#e8e8e8, #e8e8e8),
        linear-gradient(#e8e8e8, #e8e8e8),
        linear-gradient(#e8e8e8, #e8e8e8);
    background-size: 1px 100%, 1px 100%, 1px 100%, 100% 2px, 100% 2px;
    background-position: 136px 0, 273px 0, 409px 0, 0 116px, 0 355px;
}

.pane-short {
    height: 162px;
    margin-bottom: 15px;
}

.pane-tall {
    height: 174px;
    margin-bottom: 15px;
}

.pane-last {
    margin-bottom: 0;
}

.panes {
    flex: none;
}

.lbl {
    position: absolute;
    font-size: 36.5px;
    line-height: 40px;
    white-space: nowrap;
}

.num-left { left: 13px; top: 10px; font-size: 36px; }
.num-right { right: 10px; top: 10px; font-size: 36px; }
.mid-row { top: 212px; }
.low-row { top: 425px; }

.trade-tag {
    position: absolute;
    width: 34px;
    border-radius: 5px;
    font-size: 30px;
    line-height: 36px;
    text-align: center;
}

.tag-buy {
    left: 191px;
    top: 19px;
    width: 36px;
    height: 36px;
    background-color: #e86a6a;
    color: #f9dcdc;
}

.tag-green {
    left: 200px;
    top: 36px;
    height: 37px;
    background-color: rgba(120, 200, 120, 0.55);
    color: #0b8f0b;
}

.tag-red {
    left: 38px;
    top: 328px;
    height: 38px;
    background-color: #f6bebe;
    color: #e53333;
}

.help {
    position: absolute;
    width: 37px;
    height: 37px;
    border: 3px solid #ccc;
    border-radius: 50%;
    font-size: 24px;
    line-height: 31px;
    text-align: center;
    color: #bbb;
}

.help-main { left: 114px; top: 21px; }
.help-vol { left: 192px; top: 17px; }
.help-ratio { left: 154px; top: 17px; }
.help-compare { left: 230px; top: 17px; }

.time-axis {
    display: flex;
    align-items: center;
    height: 53px;
    padding-top: 2px;
    font-size: 35px;
    color: #999;
}

.time-open { width: 183px; padding-left: 14px; }
.time-start { width: 218px; }
.time-noon { width: 215px; }

.auction-total {
    right: 1px;
    top: 337px;
    font-size: 35px;
    color: #999;
}

.chip {
    position: absolute;
    left: 13px;
    top: 10px;
    display: flex;
    align-items: center;
    height: 50px;
    padding-left: 14px;
    border-radius: 8px;
    background-color: #f2f2f2;
    font-size: 37px;
    color: #333;
}

.chip-vol { width: 169px; }
.chip-ratio { width: 131px; }
.chip-compare { width: 207px; }

.chip-arrow {
    margin-left: 9px;
    border-left: 9px solid transparent;
    border-right: 9px solid transparent;
    border-top: 13px solid #666;
}

.axis-top {
    right: 13px;
    top: 9px;
    font-size: 34px;
    color: #999;
}

.axis-ratio { top: 8px; }
.axis-compare { top: 9px; }
.axis-compare-mid { top: 60px; }
.axis-compare-low { top: 123px; }

.vol-value { left: 245px; top: 16px; color: #666; }
.vol-hand { left: 392px; top: 16px; color: #3a9a1e; }
.second-row { left: 13px; top: 58px; }
.ratio-value { left: 208px; top: 15px; }
.today-value { left: 284px; top: 16px; }
.rate-value { left: 241px; top: 58px; }

.expand {
    position: absolute;
    left: 458px;
    top: 77px;
    display: flex;
    align-items: center;
    justify-content: center;
    width: 75px;
    height: 75px;
    border-radius: 50%;
    background-color: rgba(235, 235, 235, 0.85);
}

.expand svg {
    width: 40px;
    height: 40px;
}

/* Side column */
.side {
    width: 339px;
    height: 1259px;
    border: 1px solid #eee;
    border-top-width: 2px;
}

.side-tab {
    height: 61px;
    padding-right: 16px;
    background-color: #f4f4f4;
    font-size: 30px;
    line-height: 61px;
    text-align: center;
    color: #e53333;
}

.board-name {
    margin-top: 76px;
    font-size: 44px;
    line-height: 50px;
    text-align: center;
    color: #222;
}

.stats {
    margin: 21px 5px 0 6px;
}

.stat {
    display: flex;
    justify-content: space-between;
    align-items: center;
    height: 59.6px;
    font-size: 35px;
    font-weight: 300;
    color: #666;
}

.stat b {
    font-size: 36px;
    font-weight: 400;
    color: #222;
}

.stat b.up {
    font-size: 35px;
    color: #e9303c;
}

.stat-link {
    color: #3f74d8;
}

.book-bar {
    height: 9px;
    margin: 68px 4px 0 5px;
    background-color: #e63232;
}

.book {
    margin-top: 6px;
    padding-left: 21px;
}

.book-row {
    position: relative;
    display: flex;
    align-items: center;
    height: 43.2px;
    font-size: 42px;
    letter-spacing: -1.5px;
}

.book-name {
    width: 117px;
    font-weight: 300;
    color: #666;
}

.book-price {
    width: 95px;
    color: #e53333;
}

.book-vol {
    width: 85px;
    text-align: right;
    white-space: nowrap;
    color: #333;
}

.book-big {
    position: relative;
    z-index: 1;
    font-size: 25px;
    letter-spacing: -0.6px;
}

.book-row:first-child::after {
    content: "";
    position: absolute;
    right: 4px;
    top: 7px;
    width: 100px;
    height: 30px;
    background-color: #fbd9d9;
}

.detail-head {
    display: flex;
    align-items: center;
    justify-content: center;
    height: 69px;
    margin: 20px 4px 0 5px;
    background-color: #f4f4f4;
    font-size: 44px;
    font-weight: 300;
    color: #666;
    gap: 28px;
}

.detail-arrow {
    border-left: 9px solid transparent;
    border-right: 9px solid transparent;
    border-bottom: 13px solid #666;
}

.detail-row {
    display: flex;
    align-items: center;
    height: 69px;
    padding: 3px 8px 0 10px;
    font-size: 40px;
    letter-spacing: -0.5px;
}

.detail-time {
    width: 132px;
    color: #555;
}

.detail-price {
    width: 100px;
    color: #e53333;
}

.detail-vol {
    flex: 1;
    text-align: right;
    color: #0b8f0b;
}

/* Fund banner, cut off by the bottom bar */
.banner {
    display: flex;
    justify-content: space-between;
    height: 70px;
    margin: 14px 16px 0;
    padding: 36px 42px 0 46px;
    overflow: hidden;
    border-radius: 24px 24px 0 0;
    background-color: #d9e8fb;
}

.banner-text {
    font-size: 44px;
    line-height: 50px;
    color: #4a90e2;
    white-space: nowrap;
}

.banner-close {
    flex: none;
    width: 32px;
    height: 26px;
    margin-top: 5px;
}

/* Footer */
.footer {
    position: absolute;
    left: 0;
    right: 0;
    top: 2127px;
    bottom: 0;
    background-color: #242424;
}

.actions {
    display: flex;
    height: 165px;
}

.sector {
    display: flex;
    flex-direction: column;
    align-items: center;
    width: 249px;
    padding-top: 11px;
}

.sector-arrow {
    border-left: 13px solid transparent;
    border-right: 13px solid transparent;
    border-bottom: 16px solid #aaa;
}

.sector-name {
    margin-top: 12px;
    font-size: 35px;
    line-height: 52px;
    font-weight: 300;
    color: #8a8a95;
}

.sector-pct {
    margin-top: 14px;
    font-size: 36px;
    line-height: 42px;
    color: #1fe01f;
}

.action {
    display: flex;
    flex-direction: column;
    align-items: center;
    width: 207px;
    padding-top: 22px;
    font-size: 35px;
    line-height: 52px;
    font-weight: 300;
    color: #ddd;
}

.action-icon {
    width: 56px;
    height: 56px;
    margin-bottom: 6px;
}

.nav-bar {
    display: flex;
    justify-content: center;
    gap: 232px;
    padding-top: 35px;
}

.nav-menu { width: 36px; height: 36px; }
.nav-home { width: 36px; height: 38px; }
.nav-back { width: 36px; height: 38px; }
```
